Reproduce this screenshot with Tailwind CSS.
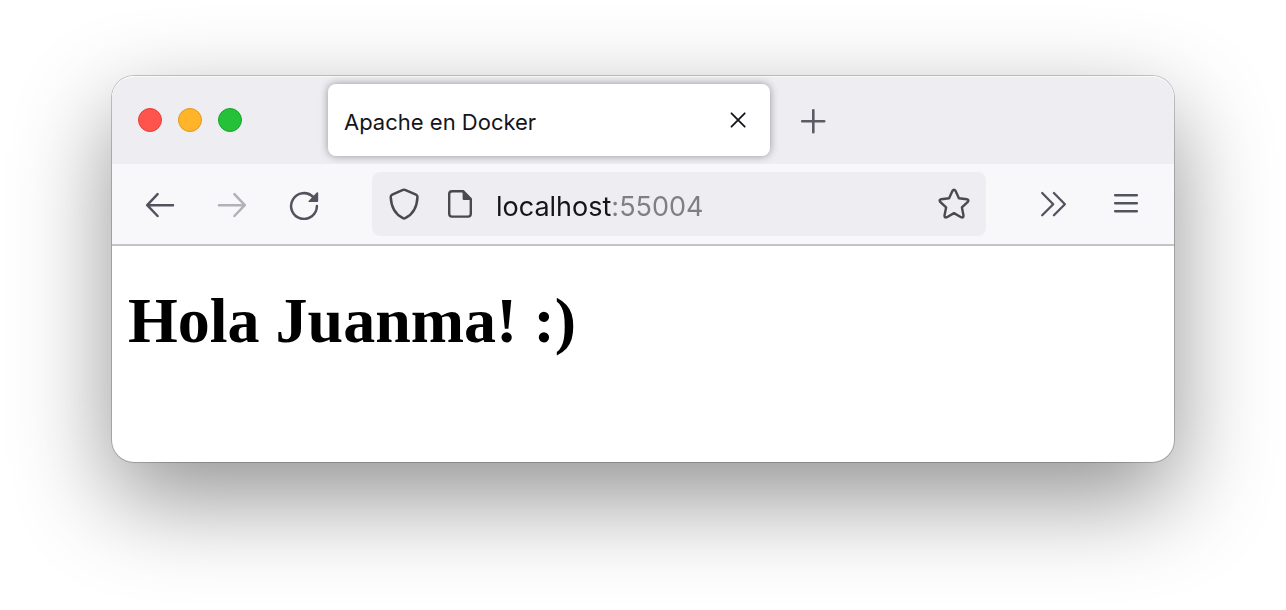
<!DOCTYPE html>
<html lang="es">
<head>
<meta charset="utf-8">
<title>Apache en Docker</title>
<script src="https://cdn.jsdelivr.net/npm/@tailwindcss/browser@4"></script>
</head>
<body class="min-h-screen bg-white px-28 pt-19 pb-37 flex flex-col overflow-x-hidden">
<div class="flex-1 flex flex-col rounded-[22px] bg-white shadow-[0_0_0_1px_rgba(0,0,0,0.2),0_36px_96px_rgba(0,0,0,0.43)]">

  <!-- Title bar with window controls and tabs -->
  <header class="h-22 flex items-center rounded-t-[22px] bg-[#eeedf2] pl-[26px] shadow-[inset_0_1px_0_rgba(255,255,255,0.7)]">
    <div class="flex gap-4 shrink-0">
      <button aria-label="Cerrar ventana" class="size-6 rounded-full bg-[#ff544d] border border-[#e24138]"></button>
      <button aria-label="Minimizar ventana" class="size-6 rounded-full bg-[#ffb429] border border-[#dd9a1f]"></button>
      <button aria-label="Ampliar ventana" class="size-6 rounded-full bg-[#25c138] border border-[#17a52a]"></button>
    </div>
    <div class="ml-[86px] h-18 w-[442px] flex items-center justify-between rounded-lg bg-white pl-4 pr-4 shadow-[0_0_8px_rgba(0,0,0,0.38)]">
      <span class="font-[Inter,sans-serif] text-[22px] leading-8 pt-1 text-[#15141a] whitespace-nowrap">Apache en Docker</span>
      <button aria-label="Cerrar pestaña" class="size-8">
        <svg class="size-8" viewBox="0 0 32 32" fill="none" stroke="#15141a" stroke-width="1.8" stroke-linecap="round"><path d="M9.5 9.300l13.200 13.400M22.700 9.300L9.500 22.700"/></svg>
      </button>
    </div>
    <button aria-label="Nueva pestaña" class="ml-[27px] size-8">
      <svg class="size-8" viewBox="0 0 32 32" fill="none" stroke="#5b5b66" stroke-width="2.6" stroke-linecap="round"><path d="M16.300 6.200v22M5.200 17.200h22"/></svg>
    </button>
  </header>

  <!-- Navigation toolbar -->
  <nav class="h-[82px] flex items-center bg-[#f8f8fb] border-b-2 border-[#c4c4c6] px-4">
    <div class="flex gap-2">
      <button aria-label="Atrás" class="w-16 h-16 grid place-items-center">
        <svg class="size-8" viewBox="0 0 32 32" fill="none" stroke="#53535f" stroke-width="2.500" stroke-linecap="round" stroke-linejoin="round"><path d="M29 17.200H3.200M13.600 6.200L3.200 17.200l10.400 10.800"/></svg>
      </button>
      <button aria-label="Adelante" disabled class="w-16 h-16 grid place-items-center">
        <svg class="size-8" viewBox="0 0 32 32" fill="none" stroke="#b1b1b8" stroke-width="2.500" stroke-linecap="round" stroke-linejoin="round"><path d="M3 17.200h25.800M18.400 6.200l10.400 11L18.400 28"/></svg>
      </button>
      <button aria-label="Recargar" class="w-16 h-16 grid place-items-center">
        <svg class="size-8" viewBox="0 0 32 32" fill="none" stroke="#53535f" stroke-width="2.500" stroke-linecap="round"><path d="M28.900 18A12.900 12.900 0 1 1 25.200 9"/><path d="M30.200 4.900v8q0 1.100-1.100 1.100h-8q-1.400 0-.5-1l8.100-8.400q1.300-1 1.500 .3z" fill="#53535f" stroke="none"/></svg>
      </button>
    </div>
    <div class="flex-1 min-w-0 mx-9 h-16 flex items-center rounded-lg bg-[#eeedf2] px-4">
      <svg class="size-8 shrink-0" viewBox="0 0 32 32" fill="none" stroke="#4a494f" stroke-width="2.500" stroke-linejoin="round"><path d="M15 1.900q1-.5 2 0l11 4.800q1.500 .7 1.500 2.300C29 19 24.200 26.800 17.200 30.200q-1.100 .6-2.200 0C8 26.800 3.200 19 2.700 9q0-1.600 1.500-2.300z"/></svg>
      <svg class="size-8 ml-6 shrink-0" viewBox="0 0 32 32" fill="none" stroke="#4a494f" stroke-width="2.400" stroke-linejoin="round"><path d="M18.600 3.200H8q-2.800 0-2.800 2.800v19.800q0 2.800 2.800 2.800h16q2.800 0 2.800-2.800V11.500z"/><path d="M18.600 2.200v8.600q0 1.200 1.200 1.200h8.100v-1.400l-8-8.400z" fill="#4a494f" stroke="none"/></svg>
      <input type="text" aria-label="Dirección" value="localhost:55004" class="flex-1 min-w-0 ml-5 h-12 pt-1 font-[Inter,sans-serif] text-[27px] outline-none text-transparent bg-clip-text bg-linear-to-r from-[#15141a] from-[115px] to-[#7f7e84] to-[115px]">
      <button aria-label="Añadir a marcadores" class="size-8 shrink-0">
        <svg class="size-8" viewBox="0 0 32 32" fill="none" stroke="#4a494f" stroke-width="2.400" stroke-linejoin="round"><path d="M14.400 3q1.600-2.600 3.200 0l3.300 7.300 7.900 .9q2.600 .6 1 2.700l-5.900 5.500 1.600 8.100q.1 2.700-2.400 1.700L16 25.100l-7.100 4.100q-2.500 1-2.400-1.700l1.600-8.100-5.900-5.500q-1.600-2.100 1-2.700l7.900-.9z"/></svg>
      </button>
    </div>
    <div class="flex gap-2">
      <button aria-label="Más herramientas" class="w-16 h-16 grid place-items-center">
        <svg class="size-8" viewBox="0 0 32 32" fill="none" stroke="#53535f" stroke-width="2.300" stroke-linecap="round" stroke-linejoin="round"><path d="M4.200 5l11 11.200L4.200 27.200M15.900 5l11 11.200L15.900 27.200"/></svg>
      </button>
      <button aria-label="Menú" class="w-16 h-16 grid place-items-center">
        <svg class="size-8" viewBox="0 0 32 32" fill="none" stroke="#53535f" stroke-width="2.500" stroke-linecap="round"><path d="M5.200 7.300h21.600M5.200 15.300h21.600M5.200 23.300h21.600"/></svg>
      </button>
    </div>
  </nav>

  <!-- Page content -->
  <main class="flex-1 px-4 pt-[38px]">
    <h1 class="font-['Liberation_Serif',serif] font-bold text-[64px] leading-[74px] text-black">Hola Juanma! :)</h1>
  </main>
</div>
</body>
</html>
